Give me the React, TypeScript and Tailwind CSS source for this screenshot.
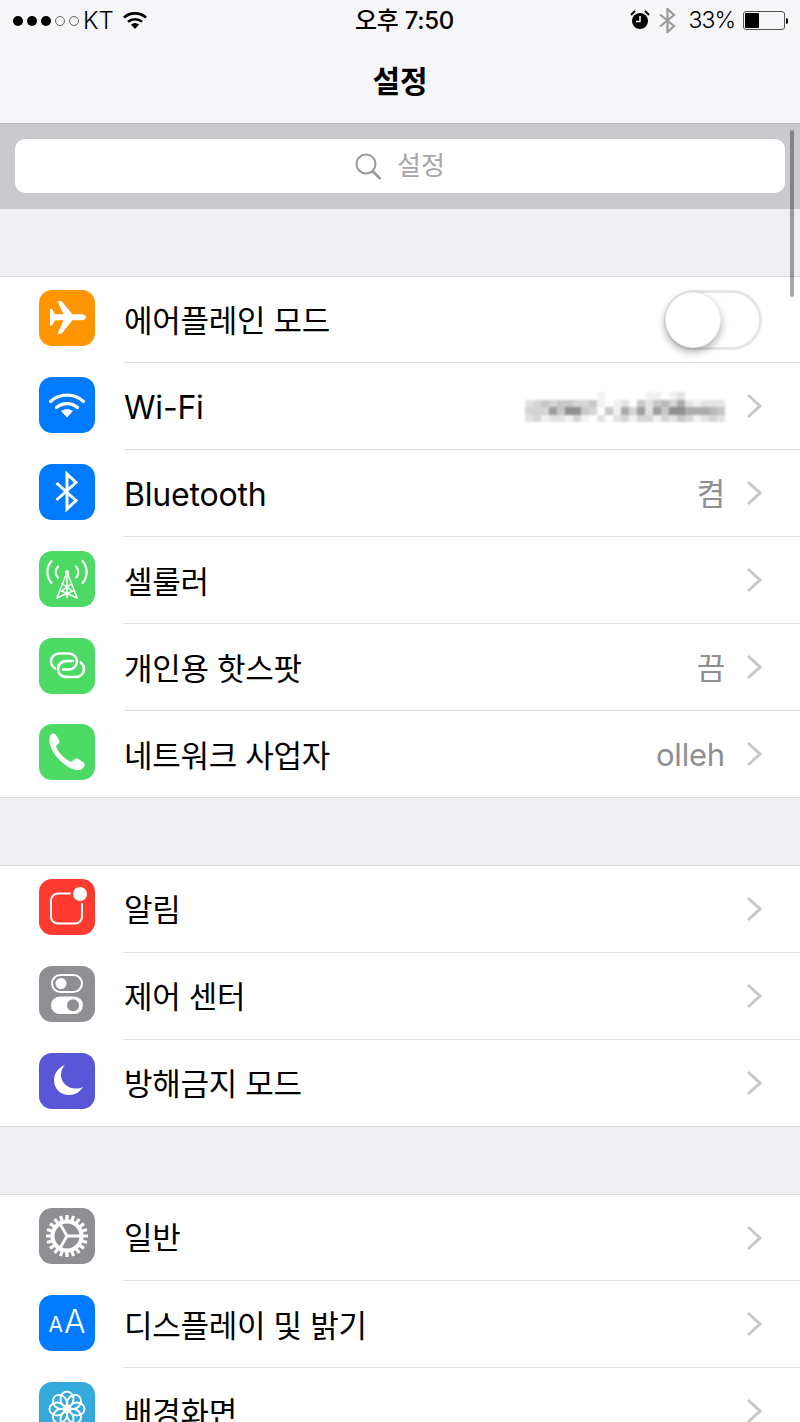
import { ReactNode } from 'react';

const mosaic = [
  '0000000001000001101200000',
  '2343443341012042453621222',
  '3337488430416372748866654',
  '2312213102023133132431232',
];

const Chevron = () => (
  <svg width="16" height="26" viewBox="0 0 16 26" fill="none" stroke="#c7c7cc" strokeWidth="3" className="shrink-0">
    <path d="M2 2l12 11L2 24" />
  </svg>
);

const Tile = ({ bg, children }: { bg: string; children: ReactNode }) => (
  <div className={`w-[56px] h-[56px] rounded-[13px] shrink-0 overflow-hidden flex items-center justify-center ${bg}`}>
    <svg width="56" height="56" viewBox="0 0 56 56">
      {children}
    </svg>
  </div>
);

const Plane = () => (
  <Tile bg="bg-[#ff9500]">
    <path fill="#fff" d="M47 27.300c0-1.600-2-3-4-3H33.500L22.500 11h-4l6 13.300H16L13 19h-2v16.500h2l3-5.200h8.500l-6 13.400h4l11-13.400H43c2 0 4-1.400 4-3z" />
  </Tile>
);

const Wifi = () => (
  <Tile bg="bg-[#007aff]">
    <g fill="none" stroke="#fff" strokeWidth="3.2" strokeLinecap="round">
      <path d="M11.500 24.500c9-8.500 24-8.500 33 0" />
      <path d="M17.500 30.500c6-5.200 15-5.200 21 0" />
    </g>
    <path fill="#fff" d="M22 34c3.500-2.500 8.500-2.500 12 0l-6 6.500z" />
  </Tile>
);

const Bluetooth = () => (
  <Tile bg="bg-[#007aff]">
    <path fill="none" stroke="#fff" strokeWidth="3" d="M17.500 19L37 36.500 28 45V10l9 8.500L17.500 36" />
  </Tile>
);

const Cellular = () => (
  <Tile bg="bg-[#4cd964]">
    <g fill="none" stroke="#fff" strokeLinecap="round">
      <g strokeWidth="2.2">
        <path d="M12.500 10c-5.500 6.500-5.500 15.500 0 22" />
        <path d="M43.500 10c5.500 6.500 5.500 15.500 0 22" />
        <path d="M19 15.500c-3 3.500-3 8 0 11" />
        <path d="M37 15.500c3 3.500 3 8 0 11" />
      </g>
      <g strokeWidth="1.5">
        <path d="M28 21v26" />
        <path d="M28 21L18 47" />
        <path d="M28 21l10 26" />
        <path d="M23.500 33l10 7-15.500 7" />
        <path d="M32.500 33l-10 7L38 47" />
      </g>
    </g>
    <circle cx="28" cy="21" r="2" fill="#fff" />
  </Tile>
);

// two linked rings, the green strokes open the gaps where one passes under the other
const Hotspot = () => (
  <Tile bg="bg-[#4cd964]">
    <g fill="none" strokeWidth="2.6">
      <rect x="19" y="23" width="26" height="16" rx="8" stroke="#fff" />
      <path d="M37.800 19v8" stroke="#4cd964" strokeWidth="6" />
      <rect x="12" y="15.500" width="26" height="16" rx="8" stroke="#fff" />
      <path d="M20 28v6.500" stroke="#4cd964" strokeWidth="6" />
      <path d="M27 39c-4.500 0-8-3.500-8-8s3.500-8 8-8" stroke="#fff" />
    </g>
  </Tile>
);

const Phone = () => (
  <Tile bg="bg-[#4cd964]">
    <path fill="#fff" d="M12 10.500C14 9 16 9.500 17 11l3 5c1 2 0 4-2 5-1 1-1 2 0 4 3 5 7 9 12 12 2 1 3 1 4-.500 1.500-2 3.500-2.500 5.500-1.500l5 3.500c1.500 1 1.500 3 .5 4.500-2 2.500-5 4-8 3-10-2-22-13-26-25-1-4-1-8 1-10.500z" />
  </Tile>
);

const Bell = () => (
  <Tile bg="bg-[#ff3b30]">
    <rect x="12" y="14.500" width="31" height="30" rx="7" fill="none" stroke="#fff" strokeWidth="2" />
    <circle cx="41" cy="15" r="9.500" fill="#ff3b30" />
    <circle cx="41" cy="15" r="7" fill="#fff" />
  </Tile>
);

const Toggles = () => (
  <Tile bg="bg-[#8e8e93]">
    <rect x="13" y="9" width="30" height="17" rx="8.500" fill="none" stroke="#fff" strokeWidth="2" />
    <circle cx="22" cy="17.500" r="5.500" fill="#fff" />
    <rect x="12" y="30.500" width="32" height="17.500" rx="8.750" fill="#fff" />
    <circle cx="34" cy="39.250" r="6" fill="#8e8e93" />
  </Tile>
);

const Moon = () => (
  <Tile bg="bg-[#5856d6]">
    <path fill="#fff" d="M26 12c-8 3-11 10-11 15 0 9 7 15 15 15 6 0 11-3 14-8-2 1-5 1.500-7 1.500-9 0-15-6.500-15-13.500 0-4 1.500-7.500 4-10z" />
  </Tile>
);

const Gear = () => (
  <Tile bg="bg-[#8e8e93]">
    <g stroke="#fff" fill="none">
      {Array.from({ length: 20 }, (_, i) => (
        <path key={i} d="M28 7v7" strokeWidth="3.2" transform={`rotate(${i * 18} 28 28)`} />
      ))}
      <circle cx="28" cy="28" r="14.500" strokeWidth="4" />
      <path d="M28 28H43M28 28L20.500 15M28 28L20.500 41" strokeWidth="2.8" />
    </g>
  </Tile>
);

const TextSize = () => (
  <div className="w-[56px] h-[56px] rounded-[13px] shrink-0 bg-[#007aff] flex items-center justify-center gap-[1px] pb-[2px] text-white font-['Inter',sans-serif] font-light leading-none">
    <span className="text-[21px] leading-[16px] pt-[6px] font-normal">A</span>
    <span className="text-[32px] leading-[26px]">A</span>
  </div>
);

const Flower = () => (
  <Tile bg="bg-[#34aadc]">
    <g fill="none" stroke="#fff" strokeWidth="1.9">
      {[0, 45, 90, 135, 180, 225, 270, 315].map((a) => (
        <ellipse key={a} cx="28" cy="17" rx="6.500" ry="7.500" transform={`rotate(${a} 28 27)`} />
      ))}
      <circle cx="28" cy="27" r="3" fill="#fff" />
    </g>
  </Tile>
);

const Row = ({ icon, label, value, last, first, toggle, blurred, latin, lift, tight }: {
  icon: ReactNode;
  label: string;
  value?: string;
  last?: boolean;
  first?: boolean;
  toggle?: boolean;
  blurred?: boolean;
  latin?: boolean;
  lift?: boolean;
  tight?: boolean;
}) => (
  <div className={`flex items-stretch bg-white ${first ? 'h-[86px]' : 'h-[87px]'}`}>
    <div className={`pl-[39px] pr-[29px] flex items-center ${lift ? 'pb-[6px]' : 'pb-[4px]'} ${last ? 'border-b border-[#d9d9dd]' : ''}`}>{icon}</div>
    <div className={`flex-1 flex items-center justify-between pr-[38px] border-b ${last ? 'border-[#d9d9dd]' : 'border-[#dedee2]'}`}>
      <span className={`${latin ? 'text-[32px] tracking-[-0.2px]' : 'text-[31px] tracking-[-0.3px]'} ${tight ? 'pt-[2px]' : 'pt-[4px]'} text-black`}>{label}</span>
      {toggle ? (
        <div className="w-[98px] h-[60px] rounded-full border-[3px] border-[#e6e6ea] flex items-center">
          <div className="w-[56px] h-[56px] -ml-[2px] rounded-full bg-white shadow-[0_4px_9px_rgba(0,0,0,0.32)] border border-[#eeeeee]" />
        </div>
      ) : (
        <div className="flex items-center gap-[21px]">
          {blurred && (
            <div className="flex flex-col blur-[1px] pt-[2px]">
              {mosaic.map((line, r) => (
                <div key={r} className="flex">
                  {line.split('').map((c, i) => {
                    const g = 255 - Number(c) * 14;
                    return <div key={i} className="w-[8px] h-[7.5px]" style={{ backgroundColor: `rgb(${g},${g},${g})` }} />;
                  })}
                </div>
              ))}
            </div>
          )}
          {value && <span className="text-[31px] text-[#8e8e93] tracking-[-0.2px] pt-[3px]">{value}</span>}
          <Chevron />
        </div>
      )}
    </div>
  </div>
);

const Group = ({ children }: { children: ReactNode }) => (
  <div className="border-t border-[#d9d9dd] flex flex-col">{children}</div>
);

const StatusBar = () => (
  <div className="grid grid-cols-3 items-center h-[41px] pl-[13px] pr-[12px] text-[24px] text-black">
    <div className="flex items-center">
      <div className="flex items-center gap-[4px]">
        <span className="w-[10px] h-[10px] rounded-full bg-black" />
        <span className="w-[10px] h-[10px] rounded-full bg-black" />
        <span className="w-[10px] h-[10px] rounded-full bg-black" />
        <span className="w-[10px] h-[10px] rounded-full border border-[#666]" />
        <span className="w-[10px] h-[10px] rounded-full border border-[#666]" />
      </div>
      <span className="ml-[4px] font-light">KT</span>
      <svg className="ml-[9px]" width="24" height="18" viewBox="0 0 24 18" fill="none" stroke="#000" strokeWidth="2.6">
        <path d="M1 5.500c6-5.500 16-5.500 22 0" />
        <path d="M5 9.800c4-3.500 10-3.500 14 0" />
        <path d="M8 12.600c2.500-2 5.500-2 8 0L12 17z" fill="#000" stroke="none" />
      </svg>
    </div>
    <div className="text-center font-medium tracking-[-0.3px] pl-[8px]">오후 7:50</div>
    <div className="flex items-center justify-end">
      <svg className="-mt-[2px]" width="20" height="20" viewBox="0 0 20 20">
        <circle cx="10" cy="11" r="8" fill="#000" />
        <path d="M10 6v5.500H6" stroke="#fff" strokeWidth="1.5" fill="none" />
        <path d="M1 5l4-4M19 5l-4-4" stroke="#000" strokeWidth="2" />
      </svg>
      <svg className="ml-[9px]" width="17" height="25" viewBox="0 0 17 25" fill="none" stroke="#9a9a9a" strokeWidth="2.2">
        <path d="M1 6.500L15 18 8.500 24V1L15 7 1 18.500" />
      </svg>
      <span className="ml-[13px] text-[23px] font-light tracking-[-1px]">33%</span>
      <div className="ml-[8px] flex items-center">
        <div className="w-[42px] h-[19px] border border-[#555] rounded-[3px] p-[1px]">
          <div className="w-[14px] h-full bg-black rounded-[1px]" />
        </div>
        <div className="ml-[1px] w-[2px] h-[6px] bg-black rounded-r-full" />
      </div>
    </div>
  </div>
);

export default function App() {
  return (
    <div className="relative w-[800px] h-[1422px] overflow-hidden bg-[#efeff4] font-['Inter','Noto_Sans_CJK_KR',sans-serif]">
      <div className="h-[124px] bg-[#f6f6f8] border-b border-[#b7b7bb]">
        <StatusBar />
        <div className="h-[82px] flex items-center justify-center text-[30px] font-bold text-black pb-[2px]">설정</div>
      </div>

      <div className="h-[85px] bg-[#c9c9ce] px-[15px] pt-[15px]">
        <div className="h-[54px] rounded-[10px] bg-white flex items-center justify-center gap-[15px]">
          <svg width="27" height="27" viewBox="0 0 27 27" fill="none" stroke="#9a9a9e" strokeWidth="2">
            <circle cx="11" cy="11" r="9.5" />
            <path d="M17.500 18l8 8" strokeWidth="2.6" />
          </svg>
          <span className="text-[26px] text-[#a5a5aa] pb-[2px]">설정</span>
        </div>
      </div>

      <div className="h-[67px]" />
      <Group>
        <Row first icon={<Plane />} label="에어플레인 모드" toggle />
        <Row latin icon={<Wifi />} label="Wi-Fi" blurred />
        <Row latin icon={<Bluetooth />} label="Bluetooth" value="켬" />
        <Row icon={<Cellular />} label="셀룰러" />
        <Row icon={<Hotspot />} label="개인용 핫스팟" value="끔" />
        <Row last icon={<Phone />} label="네트워크 사업자" value="olleh" />
      </Group>

      <div className="h-[67px]" />
      <Group>
        <Row lift tight icon={<Bell />} label="알림" />
        <Row lift tight icon={<Toggles />} label="제어 센터" />
        <Row last tight icon={<Moon />} label="방해금지 모드" />
      </Group>

      <div className="h-[67px]" />
      <Group>
        <Row first tight icon={<Gear />} label="일반" />
        <Row icon={<TextSize />} label="디스플레이 및 밝기" />
        <Row icon={<Flower />} label="배경화면" />
      </Group>

      {/* scroll indicator */}
      <div className="absolute top-[130px] right-[6px] w-[4px] h-[167px] rounded-full bg-black/35" />
    </div>
  );
}
